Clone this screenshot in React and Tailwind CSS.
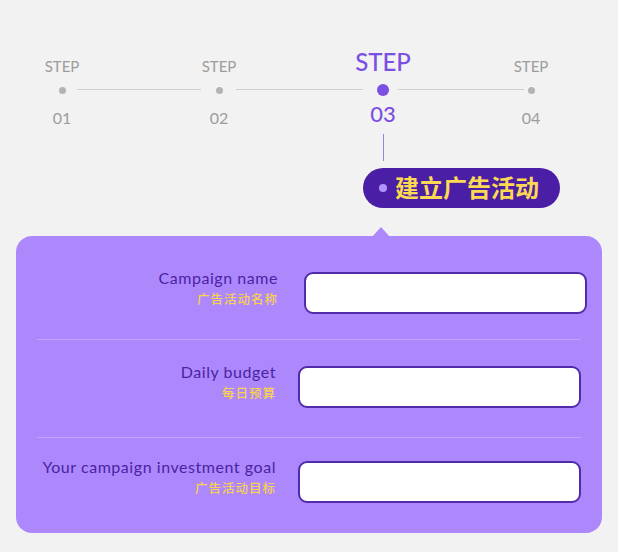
import React from "react";

const steps = [
  { label: "STEP", num: "01" },
  { label: "STEP", num: "02" },
  { label: "STEP", num: "03", active: true },
  { label: "STEP", num: "04" },
];

const connectors = [
  { w: "w-[125px]", line: "ml-[-1px] mr-[2px]" },
  { w: "w-[132px]", line: "ml-[1px] mr-[4px]" },
  { w: "w-[116px]", line: "ml-[-1px] mr-[-9px]" },
];

const rows = [
  {
    en: "Campaign name",
    zh: "广告活动名称",
    pad: "pt-[36px] pb-[25px]",
    labelW: "w-[262px]",
    gap: "gap-[26px] pr-[15px]",
  },
  {
    en: "Daily budget",
    zh: "每日预算",
    pad: "pt-[26px] pb-[29px]",
    labelW: "w-[260px]",
    gap: "gap-[22px] pr-[21px]",
  },
  {
    en: "Your campaign investment goal",
    zh: "广告活动目标",
    pad: "pt-[23px] pb-[30px]",
    labelW: "w-[260px]",
    gap: "gap-[22px] pr-[21px]",
  },
];

const Step = ({ step }) => (
  <div className="flex flex-col items-center w-8">
    <div className="h-[40px] flex items-end justify-center pb-[6px]">
      <span
        className={
          step.active
            ? "text-[24px] leading-none font-medium text-[#7b4fe4] whitespace-nowrap"
            : "text-[15px] leading-none text-[#9c9c9c] whitespace-nowrap"
        }
      >
        {step.label}
      </span>
    </div>
    <div className="h-[20px] flex items-center justify-center">
      {step.active ? (
        <div className="w-3 h-3 rounded-full bg-[#7b4fe4]" />
      ) : (
        <div className="w-[7px] h-[7px] rounded-full bg-[#b3b3b3]" />
      )}
    </div>
    <span
      className={
        step.active
          ? "mt-[3px] text-[22px] leading-none font-medium text-[#7b4fe4]"
          : "mt-[10px] text-[16px] leading-none text-[#9c9c9c]"
      }
    >
      {step.num}
    </span>
  </div>
);

const App = () => {
  return (
    <div
      className="w-[618px] h-[552px] bg-[#f2f2f2] overflow-hidden"
      style={{ fontFamily: "Lato, 'Noto Sans CJK SC', sans-serif" }}
    >
      {/* stepper */}
      <div className="flex items-start pl-[46px] pt-[40px]">
        {steps.map((s, i) => (
          <React.Fragment key={s.num}>
            <Step step={s} />
            {i < connectors.length && (
              <div className={`${connectors[i].w} shrink-0 mt-[49px]`}>
                <div className={`h-px bg-[#cfcfcf] ${connectors[i].line}`} />
              </div>
            )}
          </React.Fragment>
        ))}
      </div>

      <div className="ml-[383px] mt-[8px] w-px h-[27px] bg-[#9d80e6]" />

      <div className="ml-[363px] mt-[7px] w-[197px] h-[40px] rounded-full bg-[#4a1fa6] flex items-center pl-4 gap-2">
        <div className="w-2 h-2 rounded-full bg-[#b193ff]" />
        <span className="text-[24px] leading-none font-bold text-[#fcd953]">
          建立广告活动
        </span>
      </div>

      {/* form card */}
      <div className="relative mx-[16px] mt-[28px] w-[586px] rounded-[16px] bg-[#ad88fd] flex flex-col">
        <div className="absolute -top-[9px] left-[356px] w-0 h-0 border-l-[9px] border-r-[9px] border-b-[10px] border-l-transparent border-r-transparent border-b-[#ad88fd]" />
        {rows.map((r, i) => (
          <React.Fragment key={r.en}>
            {i > 0 && <div className="h-px mx-[21px] bg-[#c0a4ff]" />}
            <div className={`flex items-start ${r.pad} ${r.gap}`}>
              <div className={`${r.labelW} shrink-0 flex flex-col items-end -mt-[4px]`}>
                <span className="text-[16px] leading-[20px] text-[#4a23a3] tracking-[0.55px] whitespace-nowrap">
                  {r.en}
                </span>
                <span className="mt-[4px] text-[12.5px] leading-[16px] font-medium text-[#f8d24c] tracking-[1px]">
                  {r.zh}
                </span>
              </div>
              <input
                type="text"
                className="flex-1 min-w-0 h-[42px] bg-white border-2 border-[#522bab] rounded-[9px] outline-none"
              />
            </div>
          </React.Fragment>
        ))}
      </div>
    </div>
  );
};

export default App;
